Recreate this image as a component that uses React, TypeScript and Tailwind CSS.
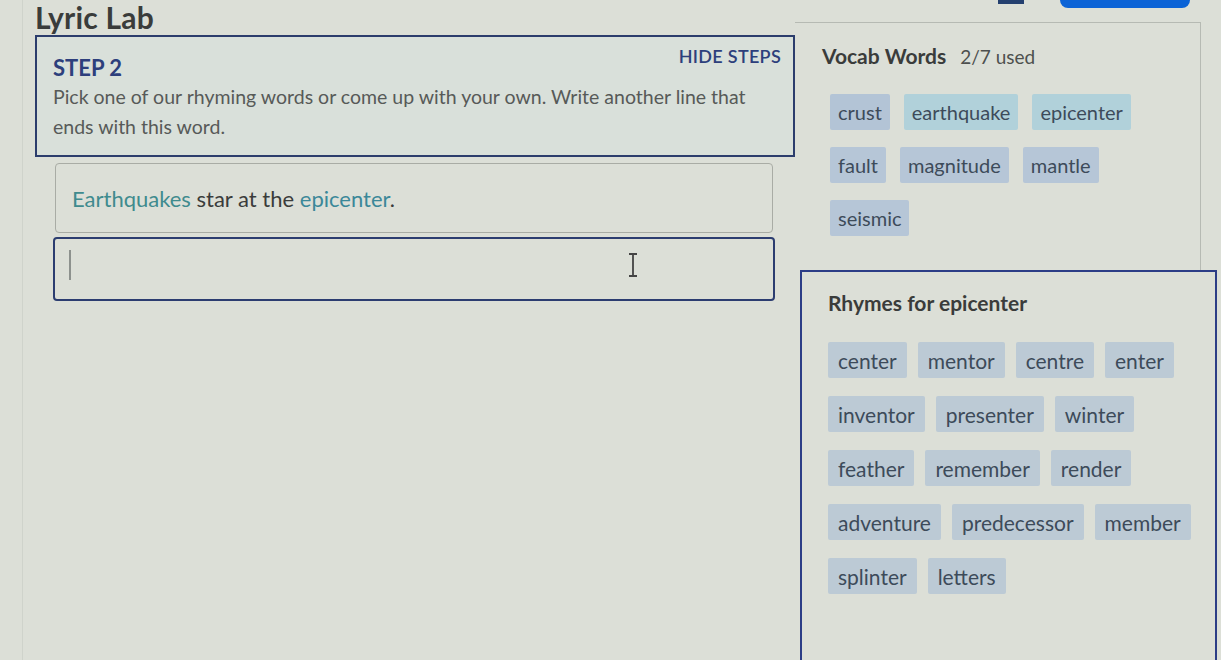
import React from "react";

const vocab: { w: string; c: string }[][] = [
  [
    { w: "crust", c: "bg-[#b3c4d6]" },
    { w: "earthquake", c: "bg-[#b1d1da]" },
    { w: "epicenter", c: "bg-[#b1d1da]" },
  ],
  [
    { w: "fault", c: "bg-[#b6c6d7]" },
    { w: "magnitude", c: "bg-[#b6c6d7]" },
    { w: "mantle", c: "bg-[#b6c6d7]" },
  ],
  [{ w: "seismic", c: "bg-[#b6c6d7]" }],
];

const rhymes: string[][] = [
  ["center", "mentor", "centre", "enter"],
  ["inventor", "presenter", "winter"],
  ["feather", "remember", "render"],
  ["adventure", "predecessor", "member"],
  ["splinter", "letters"],
];

function Chip({ w, c, small }: { w: string; c: string; small?: boolean }) {
  return (
    <span
      className={`h-[36px] flex items-center leading-none text-[#3d4b5a] rounded-[2px] ${
        small ? "px-[8px] text-[20px]" : "px-[10px] text-[21px]"
      } ${c}`}
    >
      {w}
    </span>
  );
}

export default function App() {
  return (
    <div
      className="w-[1221px] h-[660px] overflow-hidden bg-[#dcdfd7] relative"
      style={{ fontFamily: "Lato, 'Noto Sans', sans-serif" }}
    >
      <div className="absolute left-[22px] top-0 bottom-0 w-px bg-[#cfd3cb]" />
      {/* header */}
      <div className="h-[20px] flex items-start pl-[35px]">
        <div className="mt-0 text-[30px] font-bold leading-[34px] text-[#3a3c3b] tracking-[0.2px]">
          Lyric Lab
        </div>
        <div className="ml-auto flex items-start">
          <div className="w-[26px] h-[4px] bg-[#24406f]" />
          <div className="ml-[36px] mr-[31px] w-[130px] h-[8px] rounded-b-[10px] bg-[#0b63d6]" />
        </div>
      </div>

      {/* main */}
      <div className="flex pl-[35px]">
        {/* left column */}
        <div className="w-[760px] flex flex-col">
          <div className="mt-[15px] h-[122px] border-2 border-[#2c3d6c] bg-[#d9e0da] pl-[16px] pr-[12px] relative z-10">
            <div className="flex items-start justify-between">
              <div className="mt-[18px] text-[22px] font-bold text-[#2d3f7c] leading-[26px]">STEP 2</div>
              <div className="mt-[8px] text-[18px] font-semibold tracking-[0.3px] text-[#2d3f7c] leading-[22px]">
                HIDE STEPS
              </div>
            </div>
            <div className="mt-[1px] text-[19.5px] text-[#575a58] leading-[30px] whitespace-nowrap">
              <div>Pick one of our rhyming words or come up with your own. Write another line that</div>
              <div>ends with this word.</div>
            </div>
          </div>

          <div className="mt-[6px] ml-[20px] w-[718px] h-[70px] border-[1.5px] border-[#a9aca5] rounded-[4px] flex items-center pl-[16px] text-[22px] text-[#3a3c3b]">
            <span>
              <span className="text-[#3f8b8e]">Earthquakes</span> star at the{" "}
              <span className="text-[#3b8899]">epicenter</span>.
            </span>
          </div>

          <div className="mt-[4px] ml-[18px] w-[722px] h-[64px] border-2 border-[#2c3d70] rounded-[4px] flex items-center pl-[14px] relative">
            <div className="w-[2px] h-[30px] bg-[#8d918d] mb-[8px]" />
            <svg
              className="absolute left-[572px] top-[14px]"
              width="12"
              height="24"
              viewBox="0 0 12 24"
            >
              <path d="M2 1h8M6 1v22M2 23h8" stroke="#444" strokeWidth="1.8" fill="none" />
            </svg>
          </div>
        </div>

        {/* right column */}
        <div className="w-[406px] flex flex-col">
          <div className="mt-[2px] h-[248px] border-t-[1.5px] border-r-[1.5px] border-[#b6bab3] pl-[27px] pr-[10px]">
            <div className="mt-[20px] flex items-baseline gap-[14px] leading-[26px]">
              <span className="text-[21px] font-bold text-[#3a3c3b]">Vocab Words</span>
              <span className="text-[19px] text-[#4d504e]">2/7 used</span>
            </div>
            <div className="mt-[24px] pl-[8px] flex flex-col gap-[17px]">
              {vocab.map((row, i) => (
                <div key={i} className="flex gap-[14px]">
                  {row.map((v) => (
                    <Chip key={v.w} w={v.w} c={v.c} small />
                  ))}
                </div>
              ))}
            </div>
          </div>
          <div className="ml-[5px] mr-[-16px] h-[400px] border-2 border-[#2c3d86] pl-[26px]">
            <div className="mt-[18px] text-[21px] font-bold text-[#3a3c3b] leading-[26px]">
              Rhymes for epicenter
            </div>
            <div className="mt-[26px] flex flex-col gap-[18px]">
              {rhymes.map((row, i) => (
                <div key={i} className="flex gap-[11px]">
                  {row.map((w) => (
                    <Chip key={w} w={w} c="bg-[#bccad5]" />
                  ))}
                </div>
              ))}
            </div>
          </div>
        </div>
      </div>
    </div>
  );
}
